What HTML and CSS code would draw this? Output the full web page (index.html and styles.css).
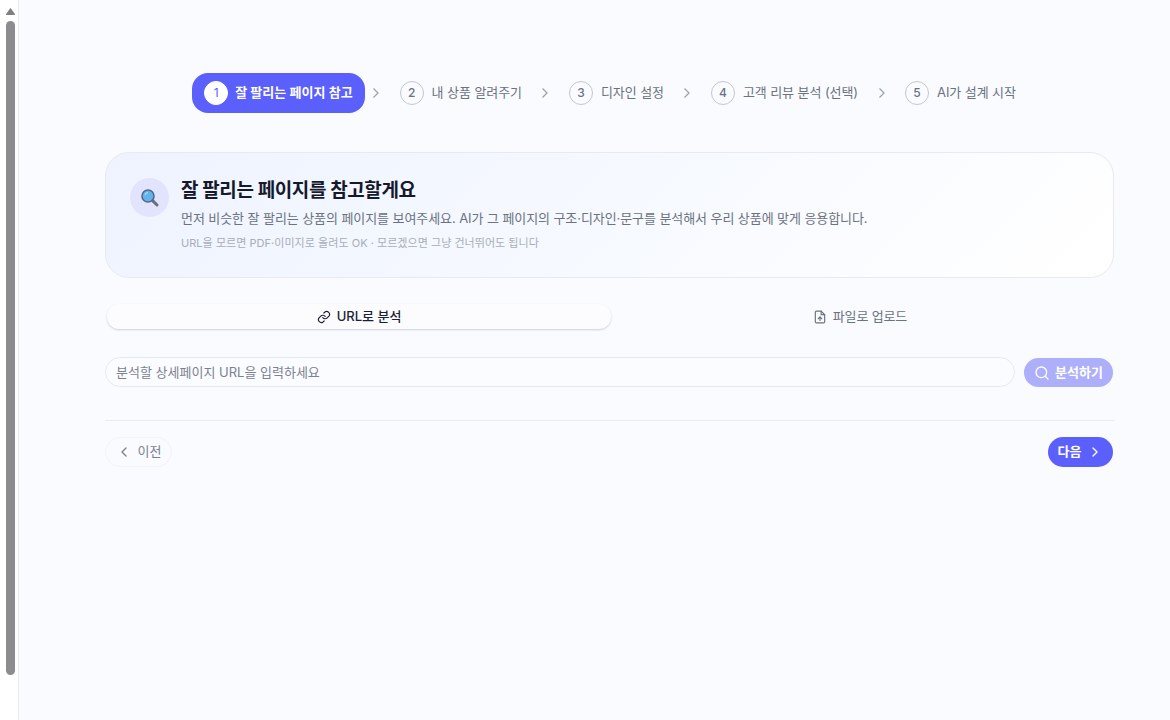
FILE: index.html
```html
<!DOCTYPE html>
<html lang="ko">
<head>
<meta charset="utf-8">
<title>잘 팔리는 페이지 참고</title>
<link rel="stylesheet" href="styles.css">
</head>
<body>
<div class="app">
  <aside class="rail">
    <svg class="scroll-up" viewBox="0 0 9 7"><path d="M4.5 .8L8.4 6.4H.6z"/></svg>
    <div class="scroll-thumb"></div>
  </aside>
  <main class="main">
    <nav class="steps">
      <div class="step active"><span class="num">1</span><span>잘 팔리는 페이지 참고</span></div>
      <svg class="sep" viewBox="0 0 16 16"><path d="M5.5 3.5l4.5 4.5-4.5 4.5"/></svg>
      <div class="step"><span class="num">2</span><span>내 상품 알려주기</span></div>
      <svg class="sep" viewBox="0 0 16 16"><path d="M5.5 3.5l4.5 4.5-4.5 4.5"/></svg>
      <div class="step"><span class="num">3</span><span>디자인 설정</span></div>
      <svg class="sep" viewBox="0 0 16 16"><path d="M5.5 3.5l4.5 4.5-4.5 4.5"/></svg>
      <div class="step"><span class="num">4</span><span>고객 리뷰 분석 (선택)</span></div>
      <svg class="sep" viewBox="0 0 16 16"><path d="M5.5 3.5l4.5 4.5-4.5 4.5"/></svg>
      <div class="step"><span class="num">5</span><span>AI가 설계 시작</span></div>
    </nav>
    <section class="hero">
      <div class="hero-icon">
        <svg viewBox="0 0 20 20" width="20" height="20"><path d="M12.6 12.6l4.4 4.4" stroke="#6b6f76" stroke-width="3" stroke-linecap="round"/><circle cx="8" cy="8" r="6" fill="#63b3ed" stroke="#54698a" stroke-width="1.6"/><path d="M5 7a3.4 3.4 0 0 1 3-2.6" stroke="#a5dcf7" stroke-width="1.2" fill="none"/></svg>
      </div>
      <div class="hero-text">
        <h1>잘 팔리는 페이지를 참고할게요</h1>
        <p class="lead">먼저 비슷한 잘 팔리는 상품의 페이지를 보여주세요. AI가 그 페이지의 구조·디자인·문구를 분석해서 우리 상품에 맞게 응용합니다.</p>
        <p class="hint">URL을 모르면 PDF·이미지로 올려도 OK · 모르겠으면 그냥 건너뛰어도 됩니다</p>
      </div>
    </section>
    <div class="tabs">
      <button class="tab on">
        <svg viewBox="0 0 24 24"><path d="M10 13a5 5 0 0 0 7.5.5l3-3a5 5 0 0 0-7-7l-1.7 1.7"/><path d="M14 11a5 5 0 0 0-7.5-.5l-3 3a5 5 0 0 0 7 7l1.7-1.7"/></svg>
        URL로 분석
      </button>
      <button class="tab">
        <svg viewBox="0 0 24 24"><path d="M14 2H6a2 2 0 0 0-2 2v16a2 2 0 0 0 2 2h12a2 2 0 0 0 2-2V8z"/><path d="M14 2v6h6"/><path d="M12 18v-6"/><path d="M9 15l3-3 3 3"/></svg>
        파일로 업로드
      </button>
    </div>
    <div class="url-row">
      <input class="url" type="text" placeholder="분석할 상세페이지 URL을 입력하세요">
      <button class="analyze">
        <svg viewBox="0 0 24 24"><circle cx="11" cy="11" r="8"/><path d="M21 21l-4.3-4.3"/></svg>
        분석하기
      </button>
    </div>
    <div class="foot">
      <button class="prev"><svg viewBox="0 0 24 24"><path d="M15 18l-6-6 6-6"/></svg>이전</button>
      <button class="next">다음<svg viewBox="0 0 24 24"><path d="M9 18l6-6-6-6"/></svg></button>
    </div>
  </main>
</div>
</body>
</html>
```
FILE: styles.css
```css
* { box-sizing: border-box; }
html, body { margin: 0; height: 100%; overflow: hidden; }
body {
  font-family: Inter, "Noto Sans CJK KR", sans-serif;
  line-height: 1.5;
  color: #1a1f36;
  background: #fafbff;
}
button, input { font-family: inherit; line-height: 1.5; }
.app { display: flex; height: 720px; }
.rail {
  width: 19px;
  flex: none;
  background: #fff;
  border-right: 1px solid #e9ebf5;
  padding: 8px 0 0 6px;
}
.scroll-up {
  display: block;
  width: 9px; height: 7px;
  fill: #808080;
  stroke: #808080;
  stroke-width: 1.2;
  stroke-linejoin: round;
}
.scroll-thumb {
  width: 9px;
  height: 654px;
  margin-top: 6px;
  border-radius: 5px;
  background: #8c8c8f;
}
.main {
  flex: 1;
  padding: 73px 57px 0 86px;
}
.steps { display: flex; align-items: center; justify-content: center; height: 40px; margin-bottom: 39px; padding-left: 2px; }
.step {
  display: flex; align-items: center; gap: 8px;
  height: 40px;
  padding: 0 12px;
  border-radius: 16px;
  font-size: 13px;
  font-weight: 400;
  letter-spacing: -0.08px;
  color: #6b7280;
  white-space: nowrap;
}
.step .num {
  width: 24px; height: 24px;
  border-radius: 50%;
  border: 1px solid #c4c7cf;
  display: flex; align-items: center; justify-content: center;
  font-size: 12px;
  font-weight: 500;
}
.step.active { gap: 7px; background: #5b5ffb; color: #fff; font-weight: 600; letter-spacing: 0; }
.step.active .num { background: #fff; border-color: #fff; color: #5b5ffb; font-weight: 400; }
.sep { width: 16px; height: 16px; margin: 0 3.5px; fill: none; stroke: #9ca3af; stroke-width: 1.3; flex: none; }
.hero {
  height: 126px;
  margin-right: -1px;
  display: flex;
  gap: 12px;
  padding: 25px 24px 0;
  border: 1px solid #e7eaf3;
  border-radius: 24px;
  background: linear-gradient(135deg, #eef3ff 0%, #f6f9ff 50%, #ffffff 100%);
}
.hero-icon {
  width: 39px; height: 39px;
  flex: none;
  border-radius: 50%;
  background: #e2e4fd;
  display: flex; align-items: center; justify-content: center;
}
.hero-text h1 { margin: 0; font-size: 19px; letter-spacing: -0.38px; line-height: 26px; font-weight: 700; color: #16192c; }
.lead { margin: 4px 0 0; font-size: 13px; letter-spacing: -0.08px; line-height: 20px; color: #6b7280; }
.hint { margin: 7px 0 0; font-size: 11px; letter-spacing: 0.04px; line-height: 16px; color: #a8adb8; }
.tabs { display: grid; grid-template-columns: 504px 1fr; margin-top: 26px; padding: 0 4px 0 2px; }
.tab {
  height: 25px;
  display: flex; align-items: center; justify-content: center; gap: 6px;
  border: 0; border-radius: 12px;
  background: transparent;
  font-size: 13px; font-weight: 400; letter-spacing: -0.15px; color: #6b7280;
}
.tab svg { width: 14px; height: 14px; fill: none; stroke: currentColor; stroke-width: 2; stroke-linecap: round; stroke-linejoin: round; }
.tab.on { background: #fcfcff; color: #1a1f36; font-weight: 500; letter-spacing: 0; box-shadow: 0 1px 2px rgba(30,35,80,.2); }
.url-row { display: flex; gap: 9px; margin-top: 28px; }
.url {
  flex: 1;
  height: 30px;
  padding: 0 10px;
  border: 1px solid #e7e9f2;
  border-radius: 15px;
  background: #fbfcff;
  font-size: 13px;
  outline: 0;
}
.url::placeholder { color: #7b8190; opacity: 1; }
.analyze {
  width: 89px; height: 29px; margin-top: 1px;
  display: flex; align-items: center; justify-content: center; gap: 5px;
  border: 0; border-radius: 15px;
  background: #adaffb;
  color: #fff;
  font-size: 13px; font-weight: 600;
  padding: 0;
}
.analyze svg { width: 16px; height: 16px; fill: none; stroke: #fff; stroke-width: 2; stroke-linecap: round; }
.foot {
  display: flex; justify-content: space-between; align-items: center;
  margin: 33px -1px 0 0;
  padding: 16px 1px 0 0;
  border-top: 1px solid #e9ebf2;
}
.prev, .next {
  height: 30px;
  display: flex; align-items: center;
  border-radius: 15px;
  font-size: 13px;
  padding: 0;
}
.prev svg, .next svg { width: 16px; height: 16px; fill: none; stroke: currentColor; stroke-width: 2; stroke-linecap: round; stroke-linejoin: round; }
.prev { width: 67px; justify-content: center; gap: 6px; background: transparent; border: 1px solid #f3f4f9; color: #7b8190; font-weight: 400; }
.next { width: 65px; justify-content: center; gap: 6px; background: #5b5ffb; border: 0; color: #fff; font-weight: 600; }
```
